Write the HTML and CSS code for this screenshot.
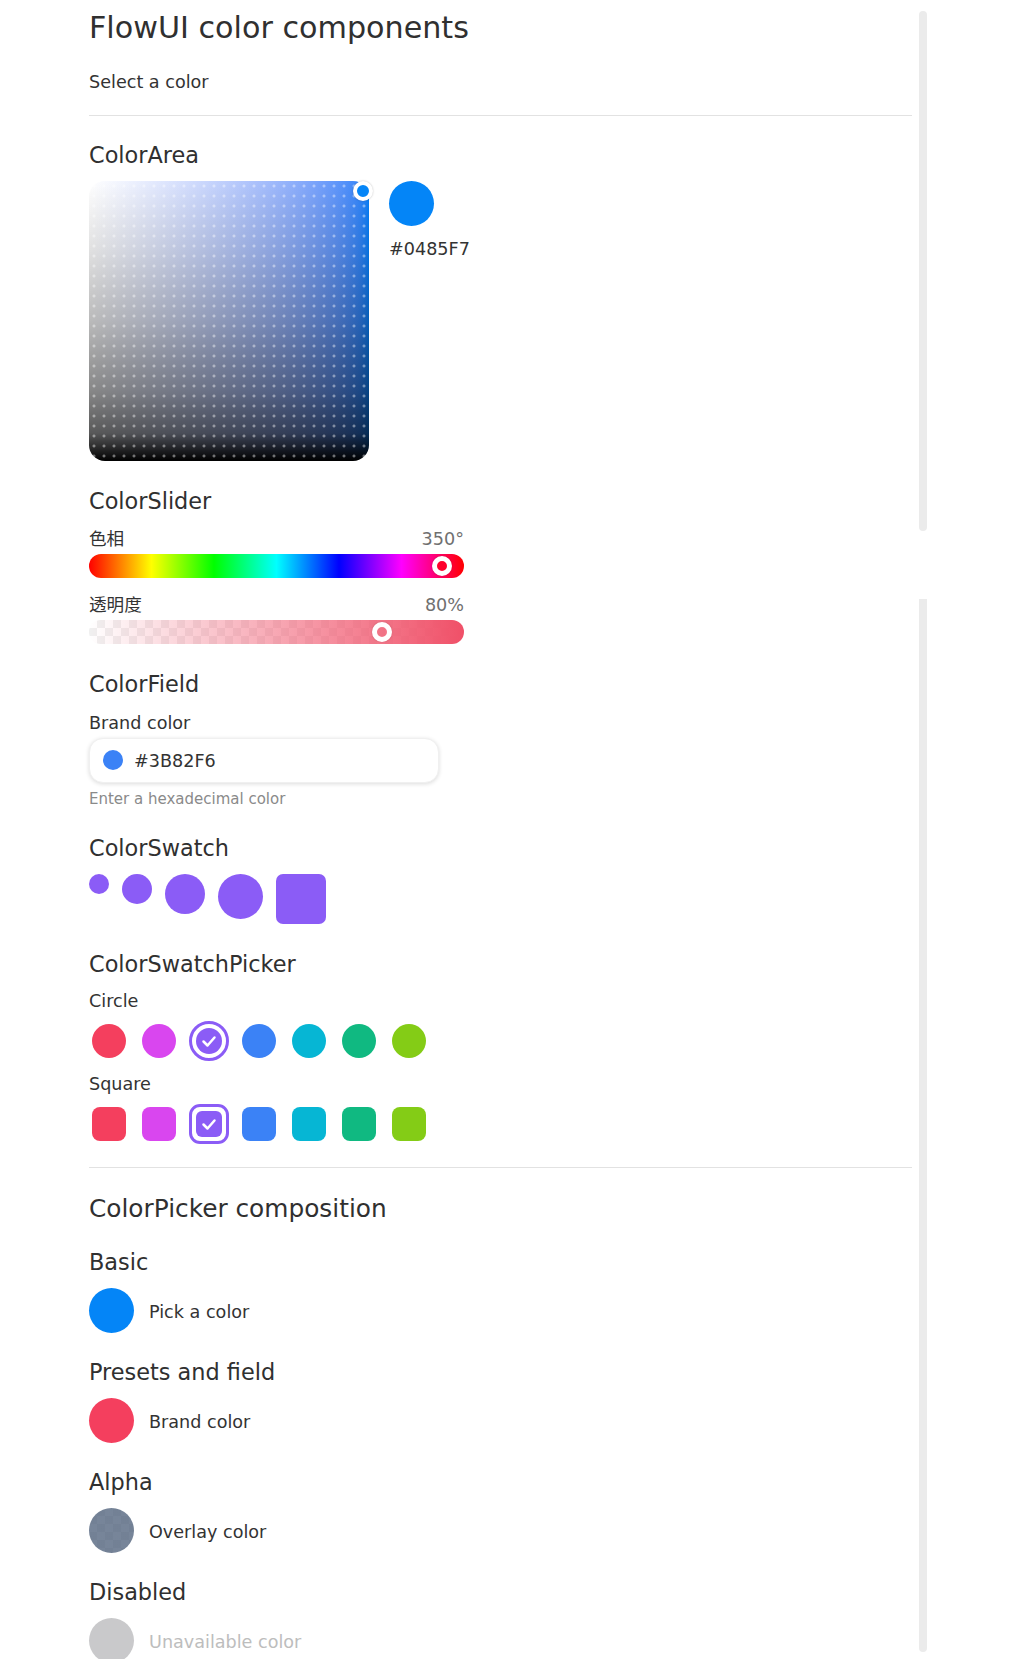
FILE: index.html
```html
<!DOCTYPE html>
<html lang="en">
<head>
  <meta charset="UTF-8" />
  <meta name="viewport" content="width=device-width, initial-scale=1.0"/>
  <title>FlowUI color components</title>
  <link rel="stylesheet" href="styles.css">
</head>
<body>
  <div class="page">
    <main class="content">
      <h1>FlowUI color components</h1>
      <p class="lead">Select a color</p>
      <hr class="rule">

      <section class="block block-first">
        <h3>ColorArea</h3>
        <div class="area-row">
          <div class="area"><span class="area-thumb"></span></div>
          <div class="area-preview">
            <span class="preview-dot"></span>
            <span class="preview-hex">#0485F7</span>
          </div>
        </div>
      </section>

      <section class="block">
        <h3>ColorSlider</h3>
        <div class="slider">
          <div class="slider-head"><span>色相</span><span class="slider-value">350°</span></div>
          <div class="track hue"><span class="thumb thumb-hue" style="--pos: 0.972"></span></div>
        </div>
        <div class="slider slider-next">
          <div class="slider-head"><span>透明度</span><span class="slider-value">80%</span></div>
          <div class="track alpha"><span class="thumb" style="--pos: 0.8"></span></div>
        </div>
      </section>

      <section class="block">
        <h3>ColorField</h3>
        <label class="field-label">Brand color</label>
        <div class="field">
          <span class="field-dot"></span>
          <span class="field-value">#3B82F6</span>
        </div>
        <div class="field-help">Enter a hexadecimal color</div>
      </section>

      <section class="block">
        <h3>ColorSwatch</h3>
        <div class="swatches">
          <span class="swatch s20"></span>
          <span class="swatch s30"></span>
          <span class="swatch s40"></span>
          <span class="swatch s45"></span>
          <span class="swatch s50 square"></span>
        </div>
      </section>

      <section class="block">
        <h3>ColorSwatchPicker</h3>
        <div class="picker-label">Circle</div>
        <div class="picker">
          <span class="opt"><span class="chip rose"></span></span>
          <span class="opt"><span class="chip fuchsia"></span></span>
          <span class="opt selected"><span class="chip violet"><svg viewBox="0 0 24 24"><polyline points="6.5,12.5 10.5,16.5 17.5,8.5"/></svg></span></span>
          <span class="opt"><span class="chip blue"></span></span>
          <span class="opt"><span class="chip cyan"></span></span>
          <span class="opt"><span class="chip emerald"></span></span>
          <span class="opt"><span class="chip lime"></span></span>
        </div>
        <div class="picker-label picker-label-next">Square</div>
        <div class="picker squares">
          <span class="opt"><span class="chip rose"></span></span>
          <span class="opt"><span class="chip fuchsia"></span></span>
          <span class="opt selected"><span class="chip violet"><svg viewBox="0 0 24 24"><polyline points="6.5,12.5 10.5,16.5 17.5,8.5"/></svg></span></span>
          <span class="opt"><span class="chip blue"></span></span>
          <span class="opt"><span class="chip cyan"></span></span>
          <span class="opt"><span class="chip emerald"></span></span>
          <span class="opt"><span class="chip lime"></span></span>
        </div>
      </section>

      <hr class="rule rule-mid">

      <h2>ColorPicker composition</h2>

      <section class="sub sub-first">
        <h3>Basic</h3>
        <div class="picker-row"><span class="picker-dot basic"></span><span class="picker-text">Pick a color</span></div>
      </section>
      <section class="sub">
        <h3>Presets and field</h3>
        <div class="picker-row"><span class="picker-dot brand"></span><span class="picker-text">Brand color</span></div>
      </section>
      <section class="sub">
        <h3>Alpha</h3>
        <div class="picker-row"><span class="picker-dot overlay"></span><span class="picker-text">Overlay color</span></div>
      </section>
      <section class="sub">
        <h3>Disabled</h3>
        <div class="picker-row disabled"><span class="picker-dot off"></span><span class="picker-text">Unavailable color</span></div>
      </section>
    </main>

    <div class="rail">
      <span class="rail-bar rail-top"></span>
      <span class="rail-bar rail-bottom"></span>
    </div>
  </div>
</body>
</html>
```

FILE: styles.css
```css
* {
  box-sizing: border-box;
}

body {
  margin: 0;
  font-family: "DejaVu Sans", Verdana, "Noto Sans CJK SC", sans-serif;
  color: #303030;
  background: #fff;
}

.page {
  display: flex;
  height: 1659px;
  overflow: hidden;
  padding: 10px 0 0 89px;
}

.content {
  width: 823px;
  flex: none;
}

h1 {
  font-size: 30.2px;
  line-height: 36px;
  font-weight: 400;
  margin: 0;
}

.lead {
  font-size: 17.6px;
  line-height: 26.4px;
  margin: 23px 0 0;
  color: #333;
}

.rule {
  border: 0;
  border-top: 1px solid #e2e2e2;
  margin: 20px 0 0;
}

.block {
  margin-top: 26px;
}

.block-first {
  margin-top: 25px;
}

h3 {
  font-size: 22.4px;
  line-height: 29px;
  font-weight: 400;
  margin: 0 0 11px;
}

/* color area */
.area-row {
  display: flex;
  gap: 20px;
  align-items: flex-start;
}

.area {
  position: relative;
  width: 280px;
  height: 280px;
  border-radius: 16px;
  background:
    radial-gradient(circle, rgba(255,255,255,0.42) 1.2px, transparent 1.8px) 0 0 / 10px 10px,
    linear-gradient(to top, #000 0%, rgba(0,0,0,0.65) 10%, rgba(0,0,0,0.47) 25%, rgba(0,0,0,0.27) 50%, rgba(0,0,0,0.12) 75%, rgba(0,0,0,0) 100%),
    linear-gradient(in srgb-linear to right, #fff, rgb(0, 128, 250));
}

.area-thumb {
  position: absolute;
  left: 264px;
  top: 0;
  width: 20px;
  height: 20px;
  border-radius: 50%;
  border: 4px solid #fff;
  background: #0485f7;
  box-shadow: 0 0 2px rgba(0,0,0,0.25);
}

.area-preview {
  display: flex;
  flex-direction: column;
  gap: 10px;
}

.preview-dot {
  width: 45px;
  height: 45px;
  border-radius: 50%;
  background: #0485f7;
}

.preview-hex {
  font-size: 17.6px;
  line-height: 26.4px;
  color: #333;
}

/* sliders */
.slider {
  width: 375px;
}

.slider-next {
  margin-top: 15px;
}

.slider-head {
  display: flex;
  justify-content: space-between;
  font-size: 17.6px;
  line-height: 24px;
  color: #333;
  margin-bottom: 3px;
}

.slider-value {
  color: #707070;
}

.track {
  position: relative;
  height: 24px;
  border-radius: 12px;
}

.hue {
  background: linear-gradient(to right, #f00, #ff0, #0f0, #0ff, #00f, #f0f, #f00);
}

.alpha {
  background:
    linear-gradient(to right, rgba(240,80,104,0), rgb(240,80,104)),
    conic-gradient(#f0f0f0 25%, #fff 0 50%, #f0f0f0 0 75%, #fff 0) 0 0 / 16px 16px;
}

.thumb {
  position: absolute;
  top: 50%;
  left: calc(12px + var(--pos) * (100% - 24px));
  width: 20px;
  height: 20px;
  border-radius: 50%;
  border: 5px solid #fff;
  transform: translate(-50%, -50%);
  box-shadow: 0 0 2px rgba(0,0,0,0.2);
}

.thumb-hue {
  background: #ff002b;
}

/* field */
.field-label {
  display: block;
  font-size: 17.6px;
  line-height: 26.4px;
  color: #333;
}

.field {
  margin-top: 1px;
  width: 350px;
  height: 45px;
  display: flex;
  align-items: center;
  gap: 11px;
  padding: 0 13px;
  border-radius: 14px;
  border: 1px solid #f0f0f0;
  background: #fff;
  box-shadow: 0 1px 4px rgba(0,0,0,0.14);
}

.field-dot {
  width: 20px;
  height: 20px;
  border-radius: 50%;
  background: #3b82f6;
}

.field-value {
  font-size: 17.6px;
  padding-top: 2px;
  color: #333;
}

.field-help {
  margin-top: 7px;
  font-size: 15px;
  line-height: 18px;
  color: #8a8a8a;
}

/* swatches */
.swatches {
  display: flex;
  gap: 13px;
  align-items: flex-start;
}

.swatch {
  background: #8b5cf6;
  border-radius: 50%;
}

.s20 { width: 20px; height: 20px; }
.s30 { width: 30px; height: 30px; }
.s40 { width: 40px; height: 40px; }
.s45 { width: 45px; height: 45px; }
.s50 { width: 50px; height: 50px; }

.swatch.square {
  border-radius: 7px;
}

/* swatch picker */
.picker-label {
  font-size: 17.6px;
  line-height: 22px;
  color: #333;
}

.picker-label-next {
  margin-top: 12px;
}

.picker {
  display: flex;
  gap: 10px;
  margin-top: 9px;
}

.opt {
  width: 40px;
  height: 40px;
  padding: 3px;
  border-radius: 50%;
}

.chip {
  display: flex;
  align-items: center;
  justify-content: center;
  width: 100%;
  height: 100%;
  border-radius: 50%;
}

.opt.selected {
  border: 3px solid #8b5cf6;
  padding: 4px;
}

.squares .opt {
  border-radius: 11px;
}

.squares .chip {
  border-radius: 8px;
}

.squares .opt.selected .chip {
  border-radius: 6px;
}

.chip svg {
  width: 24px;
  height: 24px;
  fill: none;
  stroke: #fff;
  stroke-width: 2.5;
  stroke-linecap: round;
  stroke-linejoin: round;
}

.rose { background: #f43f5e; }
.fuchsia { background: #d946ef; }
.violet { background: #8b5cf6; }
.blue { background: #3b82f6; }
.cyan { background: #06b6d4; }
.emerald { background: #10b981; }
.lime { background: #84cc16; }

.rule-mid {
  margin-top: 23px;
}

/* composition */
h2 {
  font-size: 24.8px;
  line-height: 32px;
  font-weight: 400;
  margin: 25px 0 0;
}

.sub {
  margin-top: 25px;
}

.sub-first {
  margin-top: 23px;
}

.picker-row {
  display: flex;
  align-items: center;
  gap: 15px;
  font-size: 17.6px;
  line-height: 26.4px;
  color: #333;
}

.picker-text {
  padding-top: 4px;
}

.picker-dot {
  width: 45px;
  height: 45px;
  border-radius: 50%;
}

.basic { background: #0485f7; }
.brand { background: #f43f5e; }

.overlay {
  background:
    linear-gradient(rgba(100,116,139,0.88), rgba(100,116,139,0.88)),
    conic-gradient(#ddd 25%, #fff 0 50%, #ddd 0 75%, #fff 0) 0 0 / 16px 16px;
}

.off { background: #c9c9cb; }

.picker-row.disabled {
  color: #bdbdbd;
}

/* side rail */
.rail {
  margin-left: 7px;
  width: 8px;
  flex: none;
  display: flex;
  flex-direction: column;
  gap: 68px;
  padding-top: 1px;
}

.rail-bar {
  display: block;
  width: 8px;
  background: #ebebeb;
}

.rail-top {
  height: 520px;
  border-radius: 4px;
}

.rail-bottom {
  height: 1053px;
  border-radius: 0 0 4px 4px;
}
```
